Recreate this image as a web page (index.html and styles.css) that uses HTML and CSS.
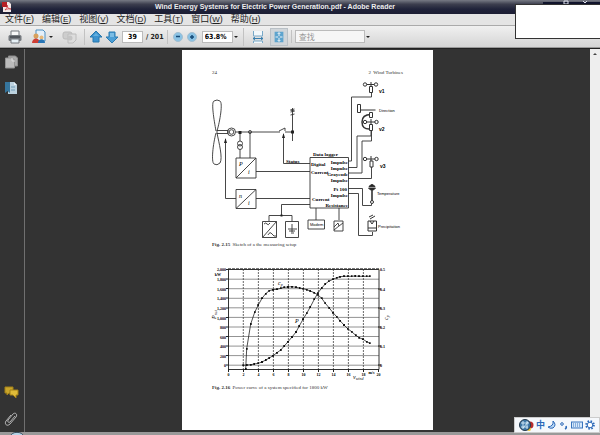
FILE: index.html
```html
<!DOCTYPE html>
<html lang="zh-CN">
<head>
<meta charset="utf-8">
<meta name="viewport" content="width=device-width, initial-scale=1">
<title>Wind Energy Systems for Electric Power Generation.pdf - Adobe Reader</title>
<link rel="stylesheet" href="styles.css">
</head>
<body>
<header class="titlebar">
  <svg class="app-icon" viewBox="0 0 10 10" aria-hidden="true"><path d="M1 0h6l2 2v8H1z" fill="#f3e9e9"/><path d="M0 0h5v5H0z" fill="#b51f24"/><path d="M3 8c2-2 3-4 2-5 0 3 2 4 4 4-2-.6-4 0-6 1z" fill="none" stroke="#c8272c" stroke-width=".7"/></svg>
  <h1 class="title">Wind Energy Systems for Electric Power Generation.pdf - Adobe Reader</h1>
  <svg class="window-controls" viewBox="0 0 57 4" aria-hidden="true"><path d="M0 2h57v2H0z" fill="#10142c"/><path d="M21 1h4v3h-4zM40 1l2 2 2-2" fill="none" stroke="#dfe2ee"/></svg>
</header>
<nav class="menubar">
  <button>文件(<u>F</u>)</button><button>编辑(<u>E</u>)</button><button>视图(<u>V</u>)</button><button>文档(<u>D</u>)</button><button>工具(<u>T</u>)</button><button>窗口(<u>W</u>)</button><button>帮助(<u>H</u>)</button>
</nav>
<div class="toolbar">
  <div class="group files">
    <button class="tool" aria-label="打印"><svg viewBox="0 0 16 16"><path d="M4 2h8v5H4z" fill="#f8f8f8" stroke="#74797e"/><rect x="1.500" y="6" width="13" height="6" rx="1.500" fill="#74797e"/><path d="M3 8h10" stroke="#30353a"/><path d="M4 10h8v4H4z" fill="#e6f0f5" stroke="#74797e"/></svg></button>
    <span class="combo"><button class="tool" aria-label="协作"><svg viewBox="0 0 16 16"><path d="M5 1h7l2 2v9H5z" fill="#e4f0fa" stroke="#4d8fc0"/><circle cx="5" cy="7" r="2.500" fill="#d8a05c"/><path d="M1 14c0-6 8-6 8 0z" fill="#ce3e34"/><circle cx="10.500" cy="8.500" r="2" fill="#e6b97b"/><path d="M7 14c0-5 7-5 7 0z" fill="#2775b5"/></svg></button><button class="caret" aria-label="协作选项"></button></span>
    <button class="tool" aria-label="签名" disabled><svg viewBox="0 0 16 16"><rect x="1" y="3" width="9" height="7" rx="2" fill="#cdcdcd" stroke="#bbb"/><path d="M6 5h8v6l-3 3H6z" fill="#ddd" stroke="#bcbcbc"/><circle cx="8" cy="9" r="2.500" fill="#c4c4c4"/></svg></button>
  </div>
  <div class="group">
    <button class="tool" aria-label="上一页"><svg viewBox="0 0 16 16"><path d="M8 2l6 6h-3v5H5V8H2z" fill="#3d93cf" stroke="#2677ad"/><path d="M8 4L5 7h6z" fill="#64b0df"/></svg></button><button class="tool" aria-label="下一页"><svg viewBox="0 0 16 16"><path d="M8 14l6-6h-3V3H5v5H2z" fill="#4c9fd6" stroke="#2b7bb0"/><path d="M6 4h4v4H6z" fill="#7bbde5"/></svg></button>
    <label class="page-no"><input class="field" value="39" aria-label="页码"><span>/ 201</span></label>
  </div>
  <div class="group">
    <button class="tool small" aria-label="缩小"><svg viewBox="0 0 14 14"><circle cx="7" cy="7" r="4.500" fill="#8bc3e5" stroke="#a4bfd0"/><path d="M5 6.500h4" stroke="#164b78" stroke-width="1.500"/></svg></button><button class="tool small" aria-label="放大"><svg viewBox="0 0 14 14"><circle cx="7" cy="7" r="4.500" fill="#8bc3e5" stroke="#a4bfd0"/><path d="M5 7h4M7 5v4" stroke="#164b78" stroke-width="1.500"/></svg></button>
    <span class="combo zoom"><input class="field wide" value="63.8%" aria-label="缩放比例"><button class="caret" aria-label="缩放选项"></button></span>
  </div>
  <div class="group fits">
    <button class="tool" aria-label="适合宽度"><svg viewBox="0 0 16 16"><path d="M3.500 2v5h9V2M3.500 14v-2h9v2" fill="#f3f8fb" stroke="#78a8c7"/><path d="M3 9.500h10M5 8l-2 1.500L5 11M11 8l2 1.500L11 11" fill="none" stroke="#397fae"/></svg></button>
    <button class="tool active" aria-label="适合页面"><svg viewBox="0 0 16 16"><rect x="3" y="2" width="10" height="12" fill="#5ea4ce"/><path d="M8 3v4M8 9v4M4 8h3M9 8h3M6.500 4.500L8 3l1.500 1.500M6.500 11.500L8 13l1.500-1.500" fill="none" stroke="#fff"/></svg></button>
  </div>
  <div class="group">
    <span class="combo"><input class="find" placeholder="查找" aria-label="查找"><button class="caret" aria-label="查找选项"></button></span>
  </div>
</div>
<aside class="popup" aria-hidden="true"></aside>
<main class="workspace">
  <div class="rail">
    <div class="rail-group">
      <button class="tool" aria-label="页面"><svg viewBox="0 0 16 16"><path d="M5.500 2h7l2 2v8h-9z" fill="#aaa" stroke="#8c8c8c"/><path d="M2.500 4h7l2 2v8h-9z" fill="#bcbcbc" stroke="#949494"/><path d="M9 4v3h3" fill="none" stroke="#ddd"/></svg></button>
      <button class="tool" aria-label="书签"><svg viewBox="0 0 16 16"><path d="M5 2h6l3 3v9H5z" fill="#bcd2df"/><path d="M11 2v3h3" fill="#eaf2f7"/><path d="M2 2h5v11l-2.500-2L2 13z" fill="#36769e"/><path d="M8 7h4M8 10h4" stroke="#6e9ab5"/></svg></button>
    </div>
    <div class="rail-group">
      <button class="tool" aria-label="注释"><svg viewBox="0 0 16 16"><path d="M2 2h8v6H6l-2 2V8H2z" fill="#c9a52b" stroke="#a38119"/><path d="M7 5h8v5h-2v3l-3-3H7z" fill="#dfbb39" stroke="#a38119"/></svg></button>
      <button class="tool" aria-label="附件"><svg viewBox="0 0 16 16"><path d="M12 5l-5 6c-1 1-3 0-2-2l5-6c2-2 5 0 3 3l-6 7c-3 3-6 0-4-3l5-6" fill="none" stroke="#b5b5b5"/></svg></button>
    </div>
  </div>
  <div class="document">
    <article class="page">
      <header class="running-head"><span>24</span><span>2&nbsp; Wind Turbines</span></header>
      <figure>
        <svg class="drawing" viewBox="182 78 251 162" role="img" aria-label="Measuring setup">
          <g fill="none" stroke="#333" stroke-width=".9">
            <path d="M216 131C214 120 211 102 214 101Q217 99 220 101C223 103 220 121 217 131M216 133C213 144 211 162 214 164Q217 166 220 163C223 158 219 143 217 133"/>
            <path d="M217 130.500h11v3h-11z"/><circle cx="231.500" cy="132" r="4"/><circle cx="231.500" cy="132" r="2.300"/>
            <path d="M236 132h44M285 132h9M279 131l6-3v3M240 132v9M240 149.500v8.500M250 132v26"/><circle cx="240" cy="143.500" r="2.500"/><circle cx="240" cy="147" r="2.500"/><circle cx="250" cy="132" r="1.500"/>
            <path d="M292.500 108v33M290.500 112l4-1-4-1 4-1M290.500 115l4-1"/>
            <path d="M225.500 139v59.500H236M283.500 134v29.500H310M256 171.500h54M256 198.500h54M310 204.500h-28.500v11M269 221v-5.500h23v5.500"/>
            <path d="M236 158h20v20h-20zM236 178l20-20M236 189.500h20v19h-20zM236 208.500l20-19M262.500 221.500h14v16h-14zM262.500 237.500l14-16M285.500 221.500h13v16h-13zM288 229h9M292 224v8M289 231h6M291 233h3"/>
            <path d="M268 235q2-4 4-1t4 2M264 224q2-2 3 0t3-1"/>
            <path d="M310 157.500h38.500V208H310zM316 208v12M339 208v12M308 220h16.500v9h-16.500zM334 221h9v10h-9zM334 227l4-4 1 3 4-3M334 230l5-4"/>
            <path d="M348 161h3.500V97h20v-5M348 167.500h9V136h14v-6M348 173h14v-32h9.500v-11M348 178.500h23.500V167M348 188.500h14.500v17h9v-2M348 193.500h10.500v42h14V232"/>
          </g>
          <g fill="#fff" stroke="#333">
            <path d="M366 84.500h9"/><circle cx="365" cy="84.500" r="1.700"/><circle cx="376" cy="84.500" r="1.700"/><path d="M369.500 86.500h3v6h-3zM371 82v4"/>
            <path d="M360.500 110h15M357.500 104.500h3v8h-3z"/><path d="M371 114.500q-9 0-9 7.500t8 7" fill="none" stroke-width="1.500"/><path d="M369.500 112.500h3v5h-3zM366 122h9M371 119v6M369.500 124.500h3v6h-3z"/><circle cx="365" cy="122" r="1.700"/><circle cx="376.500" cy="122" r="1.700"/>
            <path d="M366 159h9M371 156v5M370 161h3v6h-3z"/><circle cx="365" cy="159" r="1.700"/><circle cx="376.500" cy="159" r="1.700"/>
            <path d="M372 190v12" stroke-width="1.600"/><path d="M369 186.500q3-4 6 0zM368.500 188h7l-2 2h-3z" fill="#222"/><circle cx="372" cy="202" r="1.500"/>
            <path d="M368 221h8.500v10H368zM368 228h8M370 221l2 3 2-3M370 219l5-3M369 217l4-2"/>
          </g>
          <g fill="#222"><path d="M282 138h3l-1.500-5zM224 143h3l-1.500-5zM238.500 131h3v3h-3zM291 130.500h3v3h-3zM280.500 214.500h2v2h-2z"/></g>
          <g class="serif-label">
            <text x="313" y="156">Data logger</text><text x="286" y="163">Status</text><text x="311" y="166">Digital</text><text x="311" y="174">Current</text><text x="312" y="200.500">Current</text>
            <g text-anchor="end"><text x="348" y="164">Impulse</text><text x="348" y="170">Impulse</text><text x="348" y="176">Graycode</text><text x="348" y="182">Impulse</text><text x="347" y="191">Pt 100</text><text x="348" y="197">Impulse</text><text x="348" y="207">Resistance</text></g>
          </g>
          <g class="sans-label"><text x="379" y="111.500">Direction</text><text x="377" y="195">Temperature</text><text x="378" y="228">Precipitation</text><text x="310" y="226">Modem</text></g>
          <g class="bold-label"><text x="379" y="92.500">v1</text><text x="379" y="131">v2</text><text x="380" y="168">v3</text></g>
          <g class="symbol"><text x="239" y="166">P</text><text x="248" y="174">i</text><text x="239" y="198">n</text><text x="248" y="205">i</text></g>
        </svg>
        <figcaption><b>Fig. 2.15</b> Sketch of a the measuring setup</figcaption>
      </figure>
      <figure>
        <svg class="drawing" viewBox="182 263 251 120" role="img" aria-label="Power curve">
          <g fill="none" stroke="#777" stroke-width=".8">
            <path d="M228 279.200h151M228 288.700h151M228 298.300h151M228 307.800h151M228 317.400h151M228 327h151M228 336.500h151M228 346.100h151M228 355.600h151M228 365.200h151"/>
            <path stroke="#444" stroke-dasharray="2 1" d="M243.300 269v100M258.400 269v100M273.400 269v100M288.400 269v100M303.400 269v100M318.400 269v100M333.400 269v100M348.400 269v100M363.400 269v100"/>
          </g>
          <path d="M228.500 269.500h150.500v100h-150.500z" fill="none" stroke="#333"/><path d="M228 268.500h151" stroke="#777" stroke-dasharray="3 1"/>
          <path d="M226 269.500h3M226 279h3M226 288.500h3M226 298h3M226 308h3M226 317.500h3M226 327h3M226 336.500h3M226 346h3M226 355.500h3M226 365h3M378 289h3M378 308h3M378 327h3M378 346h3M378 365h3M228.500 369v3M243.500 369v3M258.500 369v3M273.500 369v3M288.500 369v3M303.500 369v3M318.500 369v3M333.500 369v3M348.500 369v3M363.500 369v3M378.500 369v3" stroke="#222"/>
          <defs><marker id="dot" markerWidth="2" markerHeight="2" refX="1" refY="1" markerUnits="userSpaceOnUse"><path d="M0 0h2v2H0z" fill="#111"/></marker></defs>
          <g class="curve">
            <polyline points="245.700,369 246.700,348.700 250.700,324 254.700,312.300 258.300,305 262,298.300 265.700,293.700 269.300,290.700 273,289.700 277,289.300 280.700,288.300 284.300,287.300 288,287 292,286.700 296,287.300 299.500,288 303.300,288.700 306.700,289.700 310.300,291 314.300,292.700 317.700,294.700 321.700,298.300 325.300,303.300 329.300,308 333,312.700 336.700,316.700 340,320.700 344,325 347.700,328.700 351.700,331.700 355.700,335.300 359.300,337.700 363,339.300 366.700,341.700 369.700,343.300"/>
            <polyline points="243.300,365.300 246.700,365 250.700,364.700 254.300,364 258.300,363.300 262,362 265.700,360 269.300,358 273,355.700 277,352.700 280.700,350 284.300,346 288,341.700 292,337 296,332 299.300,326 303,319.300 306.700,313.300 310.300,307 314.300,299.300 317.700,293.300 321.700,288 325.300,284 328.700,281.300 333,279.300 336.700,277.700 340,276.700 344,276.300 347.700,276.300 351.500,276.300 355.300,276 359,276.300 362.700,276.300 366.500,276.300 369.700,276.300"/>
          </g>
          <g class="tick" text-anchor="end"><text x="226" y="271">2,000</text><text x="221" y="276">kW</text><text x="226" y="281">1,800</text><text x="226" y="290.500">1,600</text><text x="226" y="300">1,400</text><text x="226" y="310">1,200</text><text x="226" y="319.500">1,000</text><text x="226" y="329">800</text><text x="226" y="338.500">600</text><text x="226" y="348">400</text><text x="226" y="357.500">200</text><text x="226" y="367">0</text></g>
          <g class="tick"><text x="380" y="271">0.5</text><text x="380" y="290.500">0.4</text><text x="380" y="310">0.3</text><text x="380" y="329">0.2</text><text x="380" y="348">0.1</text><text x="380" y="367">0</text></g>
          <g class="tick" text-anchor="middle"><text x="228.500" y="375.500">0</text><text x="243.500" y="375.500">2</text><text x="258.500" y="375.500">4</text><text x="273.500" y="375.500">6</text><text x="288.500" y="375.500">8</text><text x="303.500" y="375.500">10</text><text x="318.500" y="375.500">12</text><text x="333.500" y="375.500">14</text><text x="348.500" y="375.500">16</text><text x="363.500" y="375.500">18</text><text x="371.500" y="374">m/s</text><text x="378.500" y="375.500">20</text></g>
          <g class="symbol"><text x="278" y="285">c<tspan class="sub" dy="1">p</tspan></text><text x="295" y="323">P</text><text x="353" y="379">v<tspan class="sub" dy="1">wind</tspan></text><text transform="translate(216 319) rotate(-90)">P<tspan class="sub" dy="1">nat</tspan></text><text transform="translate(388 320) rotate(-90)">c<tspan class="sub" dy="1">p</tspan></text></g>
        </svg>
        <figcaption><b>Fig. 2.16</b> Power curve of a system specified for 1800 kW</figcaption>
      </figure>
    </article>
  </div>
  <div class="scrollbar" aria-hidden="true"><svg viewBox="0 0 10 10"><path d="M3 6l2-2 2 2z" fill="#444"/></svg></div>
</main>
<footer class="taskbar"><svg class="orb" viewBox="0 0 18 4" aria-hidden="true"><ellipse cx="9" cy="5" rx="8" ry="4.500" fill="#b7d4e7" stroke="#142b3d"/></svg></footer>
<div class="ime">
  <svg class="ime-logo" viewBox="0 0 16 14" aria-hidden="true"><circle cx="12" cy="7" r="3.500" fill="#b82b2b"/><circle cx="11" cy="11" r="2" fill="#f0c62f"/><circle cx="7" cy="7" r="5.500" fill="#3e78a8" stroke="#24384a"/><path d="M3 5h8M5 3v8M9 3v8M3 9h7M5 10l5-6" stroke="#d9edf8" stroke-width=".9"/></svg>
  <span class="ime-mode">中</span>
  <svg viewBox="0 0 10 10" aria-hidden="true"><path d="M6 1q1 5-5 6 2 2 5 1 4-3 0-7z" fill="#b9d7f4" stroke="#2b68b8"/></svg>
  <svg viewBox="0 0 10 10" aria-hidden="true"><circle cx="3" cy="4" r="1.300" fill="none" stroke="#2b68b8"/><path d="M7 6q1 2-1 3" fill="none" stroke="#2b68b8" stroke-width="1.500"/></svg>
  <svg class="keyboard" viewBox="0 0 12 10" aria-hidden="true"><rect x=".5" y="2" width="11" height="6" fill="#d6e8fa" stroke="#3a75bd"/><path d="M2 4h8M2 6h8" stroke="#3a75bd" stroke-dasharray="1 1"/></svg>
  <svg viewBox="0 0 10 10" aria-hidden="true"><circle cx="5" cy="5" r="3.800" fill="none" stroke="#2b68b8" stroke-width="2" stroke-dasharray="1.500 1.500"/><circle cx="5" cy="5" r="2.800" fill="#fff" stroke="#2b68b8"/></svg>
</div>
</body>
</html>
```
FILE: styles.css
```css
* { box-sizing: border-box; }
html, body { height: 100%; }
body {
  margin: 0;
  display: flex;
  flex-direction: column;
  overflow: hidden;
  background: #333;
  color: #222;
  font-family: "Open Sans", "Noto Sans CJK SC", sans-serif;
}
svg { display: block; }
button { padding: 0; border: 0; background: none; color: inherit; font: inherit; }
input { min-width: 0; font: inherit; border-radius: 0; }

.titlebar {
  display: flex;
  flex: none;
  align-items: center;
  height: 14px;
  padding-left: 2px;
  background: linear-gradient(#777a84, #3c3e4e 30%, #20233a 65%, #1c1e34);
}
.app-icon { width: 10px; height: 10px; }
.title {
  flex: 1;
  margin: 0 0 0 143px;
  color: #eee;
  font: bold 7px/14px "Liberation Sans", sans-serif;
  white-space: nowrap;
}
.window-controls { align-self: flex-start; width: 57px; height: 4px; }

.menubar {
  display: flex;
  flex: none;
  gap: 8px;
  height: 12px;
  padding-left: 5px;
  background: #e4e4e4;
  border-bottom: 1px solid #aaa;
  font: 9px/10px "Liberation Sans", "Noto Sans CJK SC", sans-serif;
}
.menubar button { white-space: nowrap; }
.menubar u { font-size: 8px; }

.toolbar {
  display: flex;
  flex: none;
  align-items: center;
  height: 22px;
  padding-left: 1px;
  background: linear-gradient(#f0f0f0, #d5d5d5);
  border-bottom: 1px solid #999;
  font: bold 7px/12px "DejaVu Sans Condensed", "DejaVu Sans", sans-serif;
}
.group { display: flex; align-items: center; padding: 0 3px; }
.group + .group { border-left: 1px solid #c2c2c2; }
.files { gap: 8px; padding: 0 6px; }
.fits { gap: 4px; padding-left: 6px; }
.combo, .page-no { display: flex; align-items: center; }
.page-no { gap: 3px; padding-left: 2px; white-space: nowrap; }
.zoom { padding-left: 3px; }
.tool { width: 16px; height: 16px; }
.tool svg { width: 100%; height: 100%; }
.small { width: 14px; height: 14px; }
.active { width: 18px; height: 18px; padding: 1px; background: #d0d5d9; border: 1px solid #b9c0c6; }
.field { width: 21px; height: 12px; padding: 0 2px; border: 1px solid #bbb; background: #fff; text-align: center; }
.wide { width: 31px; text-align: left; }
.find { width: 70px; height: 13px; padding: 0 3px; border: 1px solid #bbb; background: #f6f6f6; font: 8px/11px "Noto Sans CJK SC", sans-serif; }
.find::placeholder { color: #999; }
.caret { display: flex; justify-content: center; width: 7px; }
.caret::before { content: ""; border: 2px solid transparent; border-top-color: #222; border-bottom: 0; }

.popup {
  position: absolute;
  top: 4px;
  right: 0;
  width: 85px;
  height: 35px;
  background: #fff;
  border: 1px solid #333;
  border-right: 0;
}

.workspace { display: flex; flex: 1; min-height: 0; border-top: 1px solid #222; }
.rail {
  display: flex;
  flex: none;
  flex-direction: column;
  justify-content: space-between;
  width: 25px;
  padding: 5px 3px;
  border-right: 1px solid #707070;
}
.rail-group { display: flex; flex-direction: column; gap: 10px; }
.document { display: flex; flex: 1; justify-content: center; padding: 1px 0 2px; }
.page {
  flex: 0 1 251px;
  background: #fff;
  padding-top: 18px;
  color: #333;
  font: 5px/10px "Liberation Serif", serif;
}
.running-head { display: flex; justify-content: space-between; padding: 0 30px; }
figure { margin: 0 0 13px; }
.drawing { width: 100%; height: auto; }
figcaption { padding-left: 30px; white-space: nowrap; }
figcaption b { margin-right: 1px; }
.serif-label { font: bold 5px "Liberation Serif", serif; }
.sans-label { font: 4px "Liberation Sans", sans-serif; }
.bold-label { font: bold 5px "Liberation Sans", sans-serif; }
.symbol { font: italic 6px "Liberation Serif", serif; }
.sub { font-size: 4px; }
.tick { font: bold 4px "Liberation Serif", serif; }
.curve polyline {
  fill: none;
  stroke: #222;
  stroke-width: 0.8;
  marker-start: url(#dot);
  marker-mid: url(#dot);
  marker-end: url(#dot);
}
.scrollbar { flex: none; width: 10px; background: #eee; }

.taskbar { flex: none; height: 3px; padding-left: 8px; background: #999; }
.orb { width: 18px; height: 3px; }
.ime {
  position: absolute;
  right: 0;
  bottom: 2px;
  display: flex;
  align-items: center;
  gap: 2px;
  width: 86px;
  height: 16px;
  padding-left: 3px;
  background: #f5f8fc;
  border: 1px solid #ccc;
  color: #2b68b8;
}
.ime svg { flex: none; width: 10px; height: 10px; }
.ime .ime-logo { width: 16px; height: 14px; }
.ime .keyboard { width: 12px; }
.ime-mode { font: bold 9px/14px "Noto Sans CJK SC", sans-serif; }
```
